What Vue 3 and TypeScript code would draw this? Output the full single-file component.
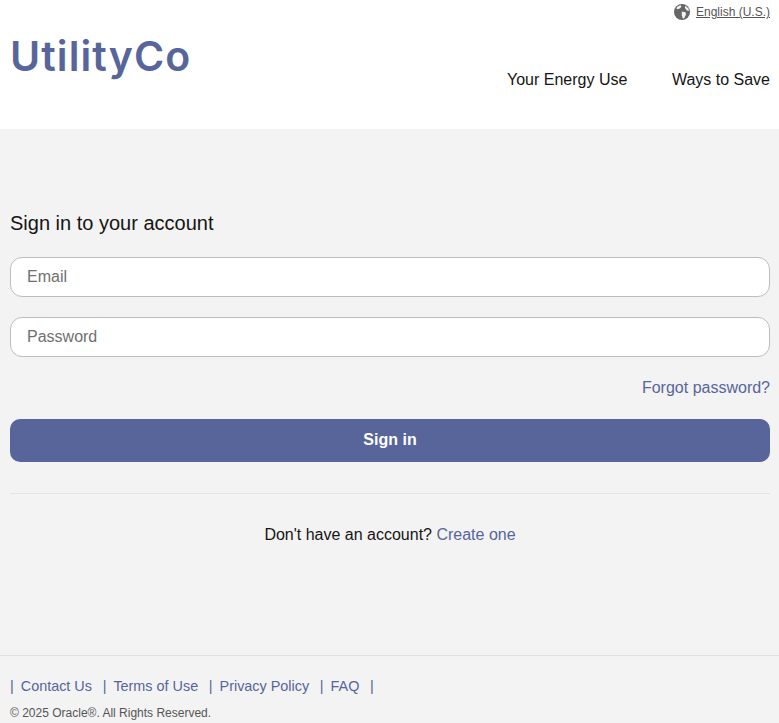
<template>
  <div class="page">
    <header class="top">
      <div class="lang-row">
        <svg class="globe" width="16" height="16" viewBox="0 0 16 16">
          <circle cx="8" cy="8" r="8" fill="#666" />
          <path d="M3.6 2.6 6.6 1.2 7.4 2.8 5.8 4.4 3.2 5.2 2.4 4.2Z" fill="#f2f2f2" />
          <path d="M7.8 7.4 11.6 8.2 12 10.6 10.2 14.2 8.8 14.6 7.8 11.2Z" fill="#f2f2f2" />
          <path d="M11.4 1.8 14.4 4.4 15 7 12.8 6.4 10.8 3.8Z" fill="#f2f2f2" />
        </svg>
        <a class="lang">English (U.S.)</a>
      </div>
      <div class="brand-row">
        <div class="logo">UtilityCo</div>
        <nav class="nav">
          <a v-for="item in navItems" :key="item">{{ item }}</a>
        </nav>
      </div>
    </header>

    <main class="content">
      <h1>Sign in to your account</h1>
      <div class="field">Email</div>
      <div class="field">Password</div>
      <div class="forgot"><a>Forgot password?</a></div>
      <button class="submit" type="button">Sign in</button>
      <hr />
      <p class="signup">Don't have an account? <a>Create one</a></p>
    </main>

    <footer class="foot">
      <div class="links">
        <span class="sep">|</span>
        <template v-for="link in footerLinks" :key="link">
          <a>{{ link }}</a>
          <span class="sep">|</span>
        </template>
      </div>
      <div class="copy">© 2025 Oracle®. All Rights Reserved.</div>
    </footer>
  </div>
</template>

<script setup lang="ts">
const navItems: string[] = ['Your Energy Use', 'Ways to Save']
const footerLinks: string[] = ['Contact Us', 'Terms of Use', 'Privacy Policy', 'FAQ']
</script>

<style>
body {
  background: #f3f3f3;
}
</style>

<style scoped>
.page {
  width: 779px;
  height: 723px;
  overflow: hidden;
  display: flex;
  flex-direction: column;
  background: #f3f3f3;
  font-family: 'Liberation Sans', Arial, sans-serif;
  color: #161513;
}

.top {
  height: 129px;
  box-sizing: border-box;
  background: #fff;
  padding: 4px 9px 0 10px;
}

.lang-row {
  display: flex;
  justify-content: flex-end;
  align-items: center;
  gap: 6px;
  height: 16px;
}

.lang {
  font-size: 12px;
  color: #555;
  text-decoration: underline;
}

.brand-row {
  display: flex;
  justify-content: space-between;
  align-items: flex-start;
}

.logo {
  margin-top: 8px;
  font-family: Inter, sans-serif;
  font-weight: 600;
  font-size: 41px;
  line-height: 56px;
  color: #57659b;
  letter-spacing: 1.1px;
}

.nav {
  display: flex;
  gap: 44.5px;
  margin-top: 51px;
  font-size: 16px;
  line-height: 18px;
}

.content {
  flex: 1;
  display: flex;
  flex-direction: column;
  padding: 82px 9px 0 10px;
}

h1 {
  margin: 0 0 22px;
  font-size: 20px;
  font-weight: 400;
  line-height: 24px;
}

.field {
  height: 40px;
  box-sizing: border-box;
  margin-bottom: 20px;
  padding-left: 16px;
  display: flex;
  align-items: center;
  background: #fff;
  border: 1px solid #bdbdbd;
  border-radius: 12px;
  font-size: 16px;
  color: #6f6f6f;
}

.forgot {
  margin-top: 2px;
  text-align: right;
  font-size: 16px;
  line-height: 18px;
  color: #57659b;
}

.submit {
  height: 43px;
  margin-top: 22px;
  padding: 0 0 2px;
  border: 0;
  border-radius: 10px;
  background: #57659b;
  color: #fff;
  font: 700 16px 'Liberation Sans', Arial, sans-serif;
}

hr {
  width: 100%;
  margin: 31px 0 0;
  border: 0;
  border-top: 1px solid #e4e4e4;
}

.signup {
  margin: 32px 0 0;
  text-align: center;
  font-size: 16px;
  line-height: 18px;
}

.signup a {
  color: #57659b;
}

.foot {
  height: 68px;
  box-sizing: border-box;
  border-top: 1px solid #e0e0e0;
  padding: 22px 10px 0;
}

.links {
  display: flex;
  font-size: 14.4px;
  line-height: 16px;
  color: #57659b;
}

.links a {
  margin: 0 10.7px 0 7px;
}

.sep {
  color: #57659b;
}

.copy {
  margin-top: 12px;
  font-size: 12px;
  line-height: 14px;
  color: #555;
}
</style>
